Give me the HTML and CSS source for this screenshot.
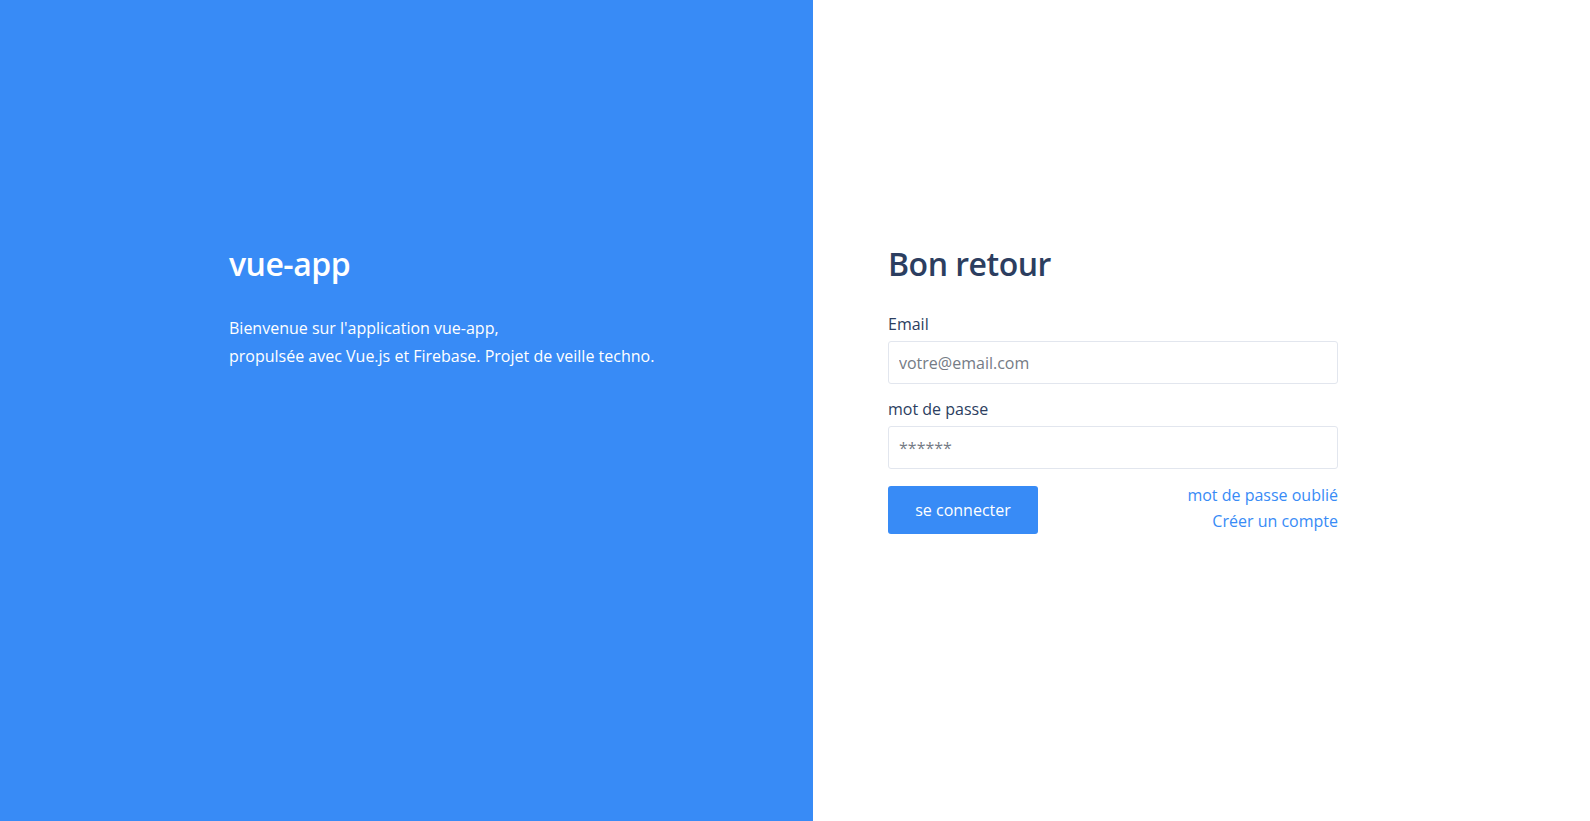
FILE: index.html
```html
<!DOCTYPE html>
<html lang="fr">
<head>
<meta charset="utf-8">
<title>vue-app</title>
<link rel="stylesheet" href="styles.css">
</head>
<body>
<div class="page">
  <section class="brand">
    <div class="brand-inner">
      <h1 class="brand-title">vue-app</h1>
      <p class="brand-text">Bienvenue sur l'application vue-app,<br>propulsée avec Vue.js et Firebase. Projet de veille techno.</p>
    </div>
  </section>
  <section class="auth">
    <form class="login-form">
      <h2 class="login-title">Bon retour</h2>
      <label class="field-label" for="email">Email</label>
      <input class="field-input" id="email" type="email" placeholder="votre@email.com">
      <label class="field-label" for="password">mot de passe</label>
      <input class="field-input" id="password" type="password" placeholder="******">
      <div class="form-actions">
        <button class="btn-primary" type="button">se connecter</button>
        <div class="form-links">
          <a class="form-link" href="#">mot de passe oublié</a>
          <a class="form-link" href="#">Créer un compte</a>
        </div>
      </div>
    </form>
  </section>
</div>
</body>
</html>
```
FILE: styles.css
```css
* { box-sizing: border-box; }
html, body { margin: 0; padding: 0; }
body {
  font-family: "Open Sans", "Noto Sans", sans-serif;
  color: #2c3e50;
  background: #fff;
}
.page {
  display: flex;
  height: 100vh;
}
.brand {
  width: 813px;
  flex-shrink: 0;
  background: #388bf6;
  color: #fff;
  padding: 240px 0 0 229px;
}
.brand-title {
  margin: 0 0 26px;
  font-size: 32px;
  line-height: 48px;
  font-weight: 600;
  letter-spacing: -0.5px;
}
.brand-text {
  margin: 0;
  font-size: 16px;
  line-height: 28px;
}
.auth {
  flex: 1;
  padding: 240px 0 0 75px;
}
.login-form {
  width: 450px;
  display: flex;
  flex-direction: column;
}
.login-title {
  margin: 0 0 24px;
  font-size: 32px;
  line-height: 48px;
  font-weight: 600;
  letter-spacing: -0.5px;
  color: #2c3e60;
}
.field-label {
  font-size: 16px;
  line-height: 24px;
  margin-bottom: 5px;
  color: #2c3e60;
}
.field-input {
  height: 43px;
  border: 1px solid #e2e6ee;
  border-radius: 3px;
  padding: 0 10px;
  font-family: inherit;
  font-size: 16px;
  color: #2c3e50;
  margin-bottom: 13px;
  outline: none;
}
.field-input::placeholder { color: #757b85; }
.form-actions {
  display: flex;
  justify-content: space-between;
  align-items: flex-start;
}
.btn-primary {
  width: 150px;
  height: 48px;
  margin-top: 4px;
  border: none;
  border-radius: 3px;
  background: #388bf6;
  color: #fff;
  font-family: inherit;
  font-size: 16px;
}
.form-links {
  display: flex;
  flex-direction: column;
  align-items: flex-end;
  line-height: 26px;
  font-size: 16px;
}
.form-link {
  color: #388bf6;
  text-decoration: none;
}
```
